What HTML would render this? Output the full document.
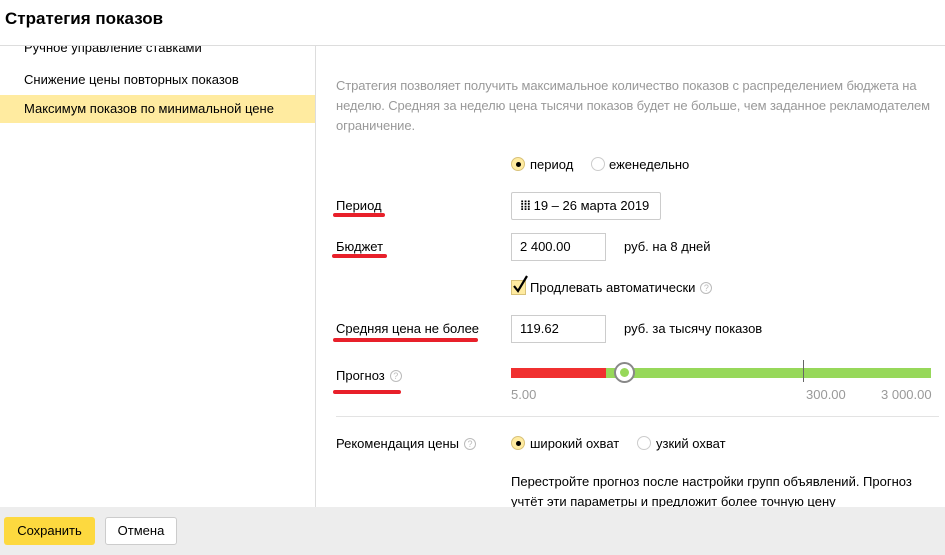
<!DOCTYPE html>
<html><head><meta charset="utf-8"><style>
*{margin:0;padding:0;box-sizing:border-box}
body{width:945px;height:555px;overflow:hidden;background:#fff;font-family:"Liberation Sans",sans-serif;font-size:13px;color:#000;position:relative}
.a{position:absolute;white-space:nowrap}
.g{color:#999}
.ul{position:absolute;height:4px;background:#e8202a;border-radius:2px}
.inp{position:absolute;border:1px solid #ccc;background:#fff;padding:0 8px;line-height:26px;height:28px}
.rad{position:absolute;width:14px;height:14px;border-radius:50%;border:1px solid #ccc;background:#fff}
.rad.on{background:#ffeba0;border-color:#d8c27a}
.rad.on:after{content:"";position:absolute;left:4px;top:4px;width:5px;height:5px;border-radius:50%;background:#000}
.q{display:inline-block;width:12px;height:12px;border:1px solid #bbb;border-radius:50%;color:#bbb;font-size:9px;line-height:10px;text-align:center;vertical-align:1px;margin-left:5px}
</style></head><body>
<div class="a" style="left:5px;top:9px;font-size:17px;font-weight:bold">Стратегия показов</div>
<div class="a" style="left:0;top:45px;width:945px;height:1px;background:#ddd"></div>
<div class="a" style="left:315px;top:46px;width:1px;height:461px;background:#ddd"></div>
<div class="a" style="left:24px;top:46px;height:14px;width:280px;overflow:hidden"><span style="position:absolute;left:0;top:-6px">Ручное управление ставками</span></div>
<div class="a" style="left:24px;top:72px">Снижение цены повторных показов</div>
<div class="a" style="left:0;top:95px;width:315px;height:28px;background:#ffeba0"></div>
<div class="a" style="left:24px;top:101px">Максимум показов по минимальной цене</div>
<div class="a g" style="left:336px;top:76px;line-height:20px;letter-spacing:-0.1px">Стратегия позволяет получить максимальное количество показов с распределением бюджета на<br>неделю. Средняя за неделю цена тысячи показов будет не больше, чем заданное рекламодателем<br>ограничение.</div>
<div class="rad on" style="left:511px;top:157px"></div>
<div class="a" style="left:530px;top:157px">период</div>
<div class="rad" style="left:591px;top:157px"></div>
<div class="a" style="left:609px;top:157px">еженедельно</div>
<div class="a" style="left:336px;top:198px">Период</div>
<div class="ul" style="left:333px;top:213px;width:52px"></div>
<div class="inp" style="left:511px;top:192px;width:150px;border-radius:2px"><b style="letter-spacing:-1px">⁞⁞⁞</b> 19 – 26 марта 2019</div>
<div class="a" style="left:336px;top:239px">Бюджет</div>
<div class="ul" style="left:332px;top:254px;width:55px"></div>
<div class="inp" style="left:511px;top:233px;width:95px">2 400.00</div>
<div class="a" style="left:624px;top:239px">руб. на 8 дней</div>
<div class="a" style="left:511px;top:280px;width:15px;height:15px;background:#ffeba0;border:1px solid #d8c27a"></div>
<svg class="a" style="left:511px;top:274px" width="18" height="20" viewBox="0 0 18 20"><path d="M3 12 L7 17 L16 2" fill="none" stroke="#000" stroke-width="2.2"/></svg>
<div class="a" style="left:530px;top:280px">Продлевать автоматически<span class="q">?</span></div>
<div class="a" style="left:336px;top:321px">Средняя цена не более</div>
<div class="ul" style="left:333px;top:338px;width:145px"></div>
<div class="inp" style="left:511px;top:315px;width:95px">119.62</div>
<div class="a" style="left:624px;top:321px">руб. за тысячу показов</div>
<div class="a" style="left:336px;top:368px">Прогноз<span class="q">?</span></div>
<div class="ul" style="left:333px;top:390px;width:68px"></div>
<div class="a" style="left:511px;top:368px;width:95px;height:10px;background:#f03030"></div>
<div class="a" style="left:606px;top:368px;width:325px;height:10px;background:#97d85a"></div>
<div class="a" style="left:803px;top:360px;width:1px;height:22px;background:#666"></div>
<div class="a" style="left:614px;top:362px;width:21px;height:21px;border-radius:50%;border:2px solid #888;background:#fff"></div>
<div class="a" style="left:620px;top:368px;width:9px;height:9px;border-radius:50%;background:#97d85a"></div>
<div class="a g" style="left:511px;top:387px">5.00</div>
<div class="a g" style="left:806px;top:387px">300.00</div>
<div class="a g" style="left:881px;top:387px">3 000.00</div>
<div class="a" style="left:336px;top:416px;width:603px;height:1px;background:#e3e3e3"></div>
<div class="a" style="left:336px;top:436px">Рекомендация цены<span class="q">?</span></div>
<div class="rad on" style="left:511px;top:436px"></div>
<div class="a" style="left:530px;top:436px">широкий охват</div>
<div class="rad" style="left:637px;top:436px"></div>
<div class="a" style="left:656px;top:436px">узкий охват</div>
<div class="a" style="left:511px;top:472px;line-height:20px">Перестройте прогноз после настройки групп объявлений. Прогноз<br>учтёт эти параметры и предложит более точную цену</div>
<div class="a" style="left:0;top:507px;width:945px;height:48px;background:#ededed"></div>
<div class="a" style="left:4px;top:517px;width:91px;height:28px;background:#fdd93f;border-radius:3px;text-align:center;line-height:28px">Сохранить</div>
<div class="a" style="left:105px;top:517px;width:72px;height:28px;background:#fff;border:1px solid #ccc;border-radius:3px;text-align:center;line-height:26px">Отмена</div>
</body></html>
